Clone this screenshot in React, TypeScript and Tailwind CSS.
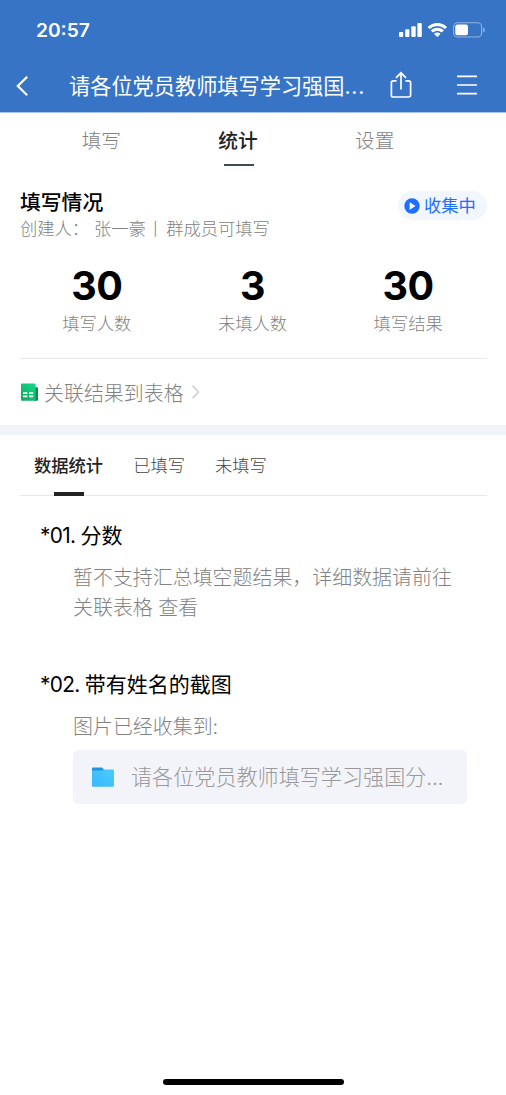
import { ReactNode } from "react";

const mainTabs = ["填写", "统计", "设置"];

const stats = [
  { value: 30, label: "填写人数" },
  { value: 3, label: "未填人数" },
  { value: 30, label: "填写结果" },
];

function StatusBar() {
  return (
    <div className="flex h-[60px] items-center justify-between pl-[36px] pr-[21px]">
      <span className="text-[19.2px] font-semibold leading-[20px]">20:57</span>
      <div className="flex items-center">
        <svg width="24" height="16" viewBox="0 0 24 16" fill="currentColor">
          <rect x="0" y="10" width="4.2" height="5" rx="1" />
          <rect x="6.2" y="7.2" width="4.2" height="7.8" rx="1" />
          <rect x="12.3" y="4.2" width="4.4" height="10.8" rx="1" />
          <rect x="18.4" y="1" width="4.4" height="14" rx="1" />
        </svg>
        <svg className="ml-[4px]" width="21" height="16" viewBox="0 0 21 16" fill="currentColor">
          <path d="M10.3 1C6.7 1 3.4 2.4.9 4.7c-.2.2-.2.5 0 .7l1.4 1.4c.2.2.5.2.7 0A10.6 10.6 0 0 1 17.6 6.8c.2.2.5.2.7 0l1.4-1.4c.2-.2.2-.5 0-.7A13.8 13.8 0 0 0 10.3 1z" />
          <path d="M10.3 5.7c-2.4 0-4.5.9-6.2 2.4-.2.2-.2.5 0 .7l1.5 1.5c.2.2.5.2.7 0a6 6 0 0 1 8 0c.2.2.5.2.7 0l1.5-1.5c.2-.2.2-.5 0-.7a9.3 9.3 0 0 0-6.2-2.4z" />
          <path d="M10.3 10.5c-1.1 0-2.1.4-2.9 1.1-.2.2-.2.5 0 .7l2.5 2.5c.2.2.6.2.8 0l2.5-2.5c.2-.2.2-.5 0-.7-.8-.7-1.8-1.1-2.9-1.1z" />
        </svg>
        <svg className="ml-[5px]" width="32" height="16" viewBox="0 0 32 16">
          <rect x=".6" y=".8" width="28" height="14.2" rx="4" fill="none" stroke="currentColor" strokeOpacity=".45" strokeWidth="1.1" />
          <rect x="2.3" y="2.6" width="12.7" height="10.6" rx="2" fill="currentColor" />
          <path d="M30.2 5.4c1 .4 1.6 1.4 1.6 2.5s-.6 2.1-1.6 2.5z" fill="currentColor" fillOpacity=".5" />
        </svg>
      </div>
    </div>
  );
}

function NavBar() {
  return (
    <div className="flex h-[52px] items-center">
      <svg className="ml-[15px]" width="15" height="22" viewBox="0 0 15 22" fill="none" stroke="currentColor" strokeWidth="2.2">
        <path d="M12.2 1.8 2.8 11l9.4 9.2" />
      </svg>
      <h1 className="ml-[39px] mt-[2px] w-[300px] whitespace-nowrap text-[21.2px] font-normal">
        请各位党员教师填写学习强国<span className="tracking-[0.8px]">...</span>
      </h1>
      <svg className="ml-[21px] -mt-[3px]" width="22" height="28" viewBox="0 0 22 28" fill="none" stroke="currentColor" strokeWidth="1.7">
        <path d="M6.5 9.9H3.2a1.8 1.8 0 0 0-1.8 1.8v12.5a1.8 1.8 0 0 0 1.8 1.8h15.6a1.8 1.8 0 0 0 1.8-1.8V11.7a1.8 1.8 0 0 0-1.8-1.8h-3.3" />
        <path d="M11 18.5V2M6 6.800l5-5 5 5" />
      </svg>
      <svg className="ml-[44px] -mt-[2px]" width="22" height="20" viewBox="0 0 22 20" stroke="currentColor" strokeWidth="1.7">
        <path d="M1 1.3h20M1 10h20M1 18.6h20" />
      </svg>
    </div>
  );
}

function SheetIcon() {
  return (
    <svg className="ml-px" width="18" height="18" viewBox="0 0 18 18">
      <defs>
        <linearGradient id="sheet" x1="1" y1="0" x2="0" y2="1">
          <stop offset="0" stopColor="#0fdc8e" />
          <stop offset="1" stopColor="#16a85c" />
        </linearGradient>
      </defs>
      <path d="M13 4.2h3.2a.8.8 0 0 1 .8.8v12a.8.8 0 0 1-.8.8H13z" fill="#118a48" />
      <path d="M.8.4h13a.8.8 0 0 1 .8.8v15.400c0 .6.3 1 .8 1.200H.8a.8.8 0 0 1-.8-.8V1.200A.8.8 0 0 1 .8.4z" fill="url(#sheet)" />
      <path d="M2 9.300h4.300v1.600H2zM8 9.300h4.200v1.600H8zM2 12.600h4.300v1.600H2zM8 12.600h4.200v1.600H8z" fill="#fff" />
    </svg>
  );
}

function FolderIcon() {
  return (
    <svg width="22" height="20" viewBox="0 0 22 20">
      <defs>
        <linearGradient id="folder" x1="0" y1="1" x2="1" y2="0">
          <stop offset="0" stopColor="#38b8fb" />
          <stop offset="1" stopColor="#4accff" />
        </linearGradient>
      </defs>
      <path d="M0 1.300C0 .8.4.4.9.4h8.400c.4 0 .7.1 1 .4l2 1.900V8H0z" fill="#2492e2" />
      <path d="M0 3.500h9.500l2-1h9.600c.5 0 .9.400.9.900v15.400c0 .5-.4.900-.9.900H.9a.9.9 0 0 1-.9-.9z" fill="url(#folder)" />
    </svg>
  );
}

function Question({ index, title, children }: { index: string; title: string; children: ReactNode }) {
  return (
    <section>
      <h3 className="whitespace-pre text-[21px] leading-[30px] text-black">
        <span className="text-[20.8px] tracking-[-0.65px]">*{index}. </span>
        {title}
      </h3>
      <div className="mt-[12px] pl-[33px] text-[19.95px] font-light leading-[30px] text-[#828282]">{children}</div>
    </section>
  );
}

export default function App() {
  return (
    <div className="flex h-[1095px] w-[506px] flex-col overflow-hidden bg-white font-['Inter','Noto_Sans_CJK_SC',sans-serif]">
      <header className="h-[113px] border-b border-[#a9c4ea] bg-[#3874c6] text-white">
        <StatusBar />
        <NavBar />
      </header>

      <nav className="ml-[33px] flex h-[53px] w-[410px] text-[19.7px]">
        {mainTabs.map((tab) => (
          <div
            key={tab}
            className={`flex flex-1 flex-col items-center ${
              tab === "统计" ? "font-medium text-[#222]" : "font-light text-[#828282]"
            }`}>
            <span className="mt-[13px] leading-[30px]">{tab}</span>
            {tab === "统计" && <span className="ml-[2px] mt-[8px] h-[2px] w-[30px] bg-[#434b5a]" />}
          </div>
        ))}
      </nav>

      <div className="pl-[20px] pr-[19px]">
        <div className="flex h-[86px] justify-between pt-[23px]">
          <div>
            <h2 className="text-[20.8px] font-medium leading-[28px] text-black">填写情况</h2>
            <p className="-mt-px whitespace-pre text-[17.3px] font-light leading-[26px] text-[#828282]">
              创建人： 张一豪<span className="ml-px mr-[2px]">丨</span>群成员可填写
            </p>
          </div>
          <div className="mt-[2px] flex h-[29px] w-[89px] items-center rounded-full bg-[#f1f6ff] pl-[6px] text-[#1e6fff]">
            <svg width="16" height="16" viewBox="0 0 16 16">
              <circle cx="8" cy="8" r="7.7" fill="currentColor" />
              <path d="M5.7 4.3 11.5 8l-5.8 3.7z" fill="#fff" />
            </svg>
            <span className="ml-[4px] mt-px whitespace-nowrap text-[17.3px] leading-[28px]">收集中</span>
          </div>
        </div>

        <div className="h-[107px] border-b border-[#e7e8ea] pt-[14px]">
          <div className="-ml-px mr-px grid grid-cols-3 text-center">
            {stats.map((s) => (
              <div key={s.label}>
                <div className="text-[39.5px] font-bold leading-[40px] tracking-[-0.4px] text-black">{s.value}</div>
                <div className="mt-[5px] text-[17.3px] font-light leading-[26px] text-[#828282]">{s.label}</div>
              </div>
            ))}
          </div>
        </div>

        <div className="flex h-[66px] items-center text-[19.95px] font-light text-[#828282]">
          <SheetIcon />
          <span className="ml-[5px] mt-[5px]">关联结果到表格</span>
          <svg className="ml-[7px]" width="10" height="14" viewBox="0 0 10 14" fill="none" stroke="#ccc" strokeWidth="1.5">
            <path d="m1.5.8 6 6.2-6 6.2" />
          </svg>
        </div>
      </div>

      <div className="h-[10px] shrink-0 bg-[#f0f4f8]" />

      <div className="ml-[20px] mr-[19px] flex h-[61px] shrink-0 gap-[30px] border-b border-[#e7e8ea] pl-[14px] text-[17.3px] font-light text-[#444]">
        <div className="flex flex-col items-center font-medium text-[#222]">
          <span className="mt-[18px] leading-[26px]">数据统计</span>
          <span className="mt-[13px] h-[4px] w-[30px] shrink-0 bg-[#222]" />
        </div>
        <span className="mt-[18px] leading-[26px]">已填写</span>
        <span className="mt-[18px] leading-[26px]">未填写</span>
      </div>

      <main className="flex flex-1 flex-col gap-[47px] pl-[40px] pr-[39px] pt-[25px]">
        <Question index="01" title="分数">
          <p className="w-[390px]">暂不支持汇总填空题结果，详细数据请前往关联表格 查看</p>
        </Question>
        <Question index="02" title="带有姓名的截图">
          <p>图片已经收集到:</p>
          <div className="mt-[8px] flex h-[54px] items-center rounded-[5px] bg-[#f3f4f9] pl-[19px] text-[21.1px] text-[#999]">
            <FolderIcon />
            <span className="ml-[17px] mt-[2px] whitespace-nowrap">
              请各位党员教师填写学习强国分<span className="tracking-[-0.4px]">...</span>
            </span>
          </div>
        </Question>
      </main>

      <div className="mx-auto mb-[10px] h-[6px] w-[181px] shrink-0 rounded-full bg-black" />
    </div>
  );
}
